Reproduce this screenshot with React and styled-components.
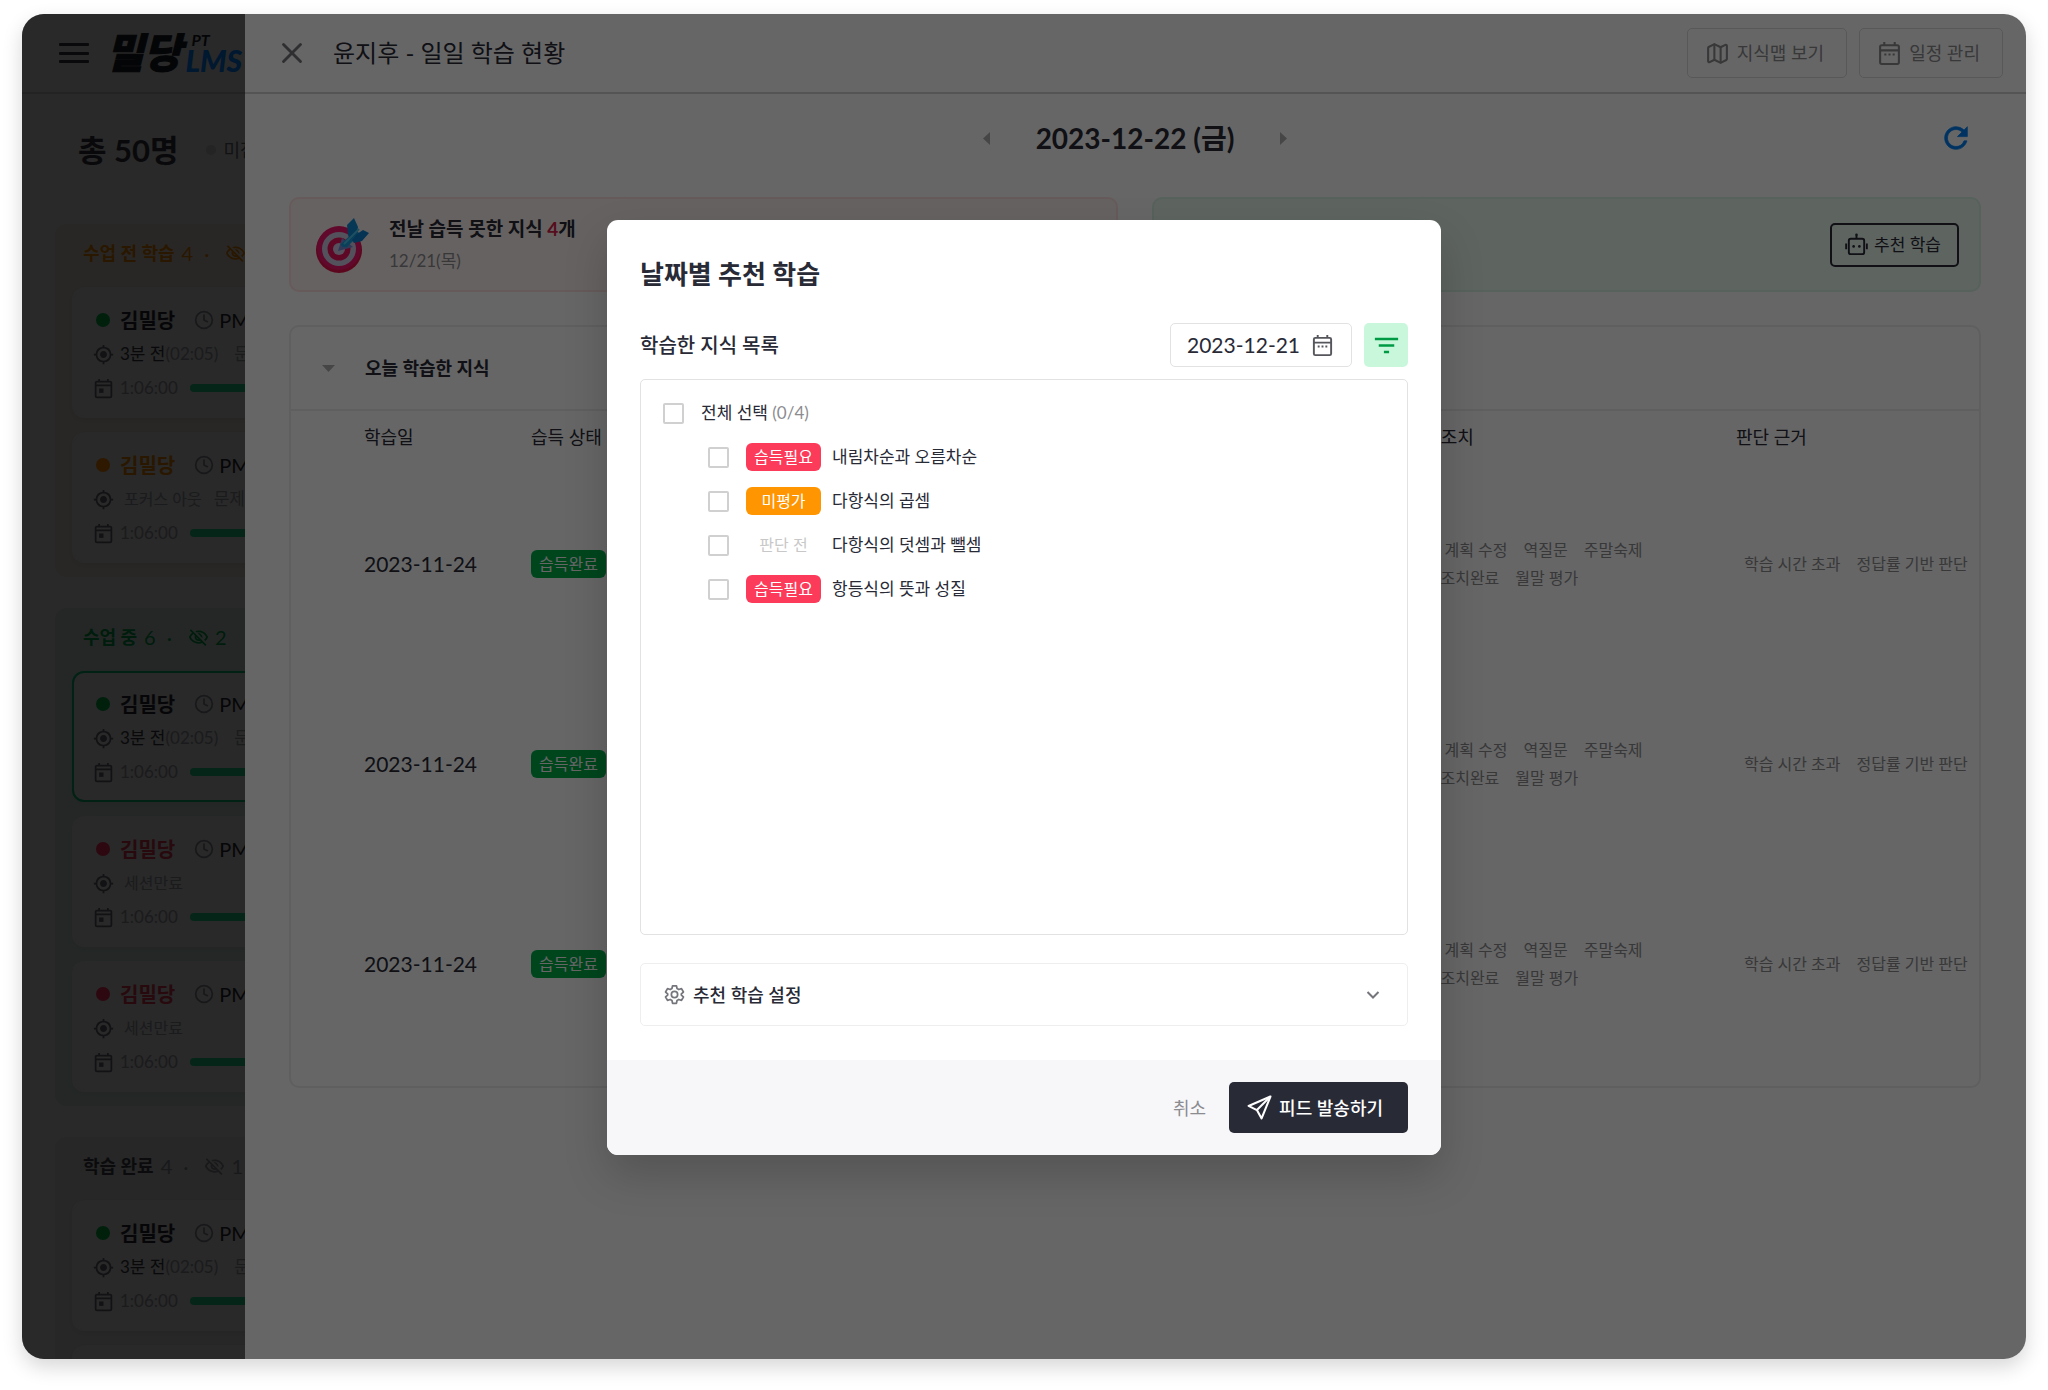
import React, { useState } from "react";
import styled, { createGlobalStyle } from "styled-components";
import { MdFilterList, MdGpsFixed, MdOutlineVisibilityOff } from "react-icons/md";
import { Clock, Map, X } from "lucide-react";

const COLORS = {
  white: "#ffffff",
  ink: "#282a36",
  gray700: "#55565c",
  gray600: "#75767c",
  gray500: "#8c8c90",
  gray300: "#c8c8c8",
  line: "#e2e2e2",
  softLine: "#eeeeee",
  red: "#fc3a59",
  orange: "#ff9500",
  green: "#00b04a",
  blue: "#0080f5",
};

const GROUP_TONES = {
  before: { panel: "#66625e", label: "#663a00", count: "#663a00" },
  during: { panel: "#5b635f", label: "#00481f", count: "#00481f" },
  done: { panel: "#626262", label: "#1c1d22", count: "#3e3f44" },
};

const STATE_TONES = {
  online: { dot: "#00501f", name: "#111115" },
  away: { dot: "#743f00", name: "#663a00" },
  expired: { dot: "#701628", name: "#651724" },
};

const GlobalStyle = createGlobalStyle`
  * {
    box-sizing: border-box;
  }
  body {
    margin: 0;
    background: ${COLORS.white};
    font-family: Lato, "Noto Sans CJK KR", sans-serif;
    font-size: 18px;
    line-height: 28px;
    color: ${COLORS.ink};
  }
  button,
  input {
    font: inherit;
    color: inherit;
  }
  h1,
  h2,
  h3,
  p {
    margin: 0;
    font-size: inherit;
    font-weight: 400;
  }
`;

const Page = styled.div`
  display: flow-root;
`;

const Window = styled.div`
  position: relative;
  display: flex;
  height: calc(100vh - 45px);
  margin: 14px 22px 31px;
  border-radius: 22px;
  overflow: hidden;
  background: ${COLORS.white};
  box-shadow: 0 8px 20px rgba(0, 0, 0, 0.16);
`;

/* sidebar */

const Sidebar = styled.aside`
  flex: none;
  width: 223px;
  overflow: hidden;
  white-space: nowrap;
  background: #666666;
`;

const SidebarHeader = styled.header`
  display: flex;
  align-items: center;
  gap: 17px;
  width: 400px;
  height: 80px;
  padding-left: 37px;
  border-bottom: 2px solid #585858;
`;

const MenuButton = styled.button`
  display: flex;
  flex-direction: column;
  justify-content: space-between;
  width: 30px;
  height: 20px;
  padding: 0;
  border: none;
  background: none;
`;

const MenuBar = styled.span`
  height: 3px;
  border-radius: 1px;
  background: #17181c;
`;

const Logo = styled.div`
  display: flex;
  align-items: center;
  gap: 4px;
  font-style: italic;
  font-weight: 900;
  color: #0c0d11;
`;

const LogoName = styled.span`
  font-size: 41px;
  line-height: 40px;
  -webkit-text-stroke: 1px #0c0d11;
`;

const LogoSide = styled.span`
  display: flex;
  flex-direction: column;
`;

const LogoTag = styled.span`
  padding-left: 6px;
  font-size: 16px;
  line-height: 14px;
  font-weight: 700;
`;

const LogoProduct = styled.span`
  font-size: 30px;
  line-height: 26px;
  color: #003c78;
`;

const Total = styled.div`
  display: flex;
  align-items: center;
  gap: 27px;
  padding: 38px 0 56px 56px;
`;

const TotalCount = styled.h2`
  font-size: 31px;
  line-height: 36px;
  font-weight: 700;
  color: #17181c;
`;

const TotalNote = styled.span`
  display: flex;
  align-items: center;
  gap: 8px;
  color: #2c2d30;
`;

const NoteDot = styled.span`
  width: 10px;
  height: 10px;
  border-radius: 50%;
  background: #5a5a5c;
`;

const Groups = styled.div`
  display: flex;
  flex-direction: column;
  gap: 31px;
  padding-left: 33px;
`;

const GroupPanel = styled.section`
  display: flex;
  flex-direction: column;
  gap: 14px;
  width: 400px;
  padding: 15px 17px 14px;
  border-radius: 12px;
  background: ${({ $tone }) => $tone.panel};
`;

const GroupTitle = styled.h3`
  display: flex;
  align-items: center;
  gap: 7px;
  height: 28px;
  margin-bottom: 6px;
  padding-left: 11px;
  font-weight: 700;
  color: ${({ $tone }) => $tone.label};
`;

const GroupCount = styled.span`
  display: flex;
  align-items: center;
  gap: 6px;
  font-weight: 400;
  font-size: 20px;
  color: ${({ $tone }) => $tone.count};
`;

const Separator = styled.span`
  padding: 0 10px 0 5px;
`;

const StudentCard = styled.article`
  display: flex;
  flex-direction: column;
  gap: 6px;
  height: 131px;
  padding: 17px 18px 0;
  border: 2px solid ${({ $selected }) => ($selected ? "#005430" : "#666666")};
  border-radius: 12px;
  background: #666666;
  box-shadow: 0 2px 6px rgba(0, 0, 0, 0.06);
  font-size: 17px;
`;

const CardRow = styled.div`
  display: flex;
  align-items: center;
  height: 28px;
  color: #434448;
`;

const IconCell = styled.span`
  display: flex;
  justify-content: center;
  flex: none;
  width: 22px;
  margin-right: 6px;
  color: #2e2f34;
`;

const StateDot = styled.span`
  width: 14px;
  height: 14px;
  border-radius: 50%;
  background: ${({ $color }) => $color};
`;

const StudentName = styled.span`
  margin-right: 19px;
  font-size: 20px;
  font-weight: 700;
  color: ${({ $color }) => $color};
`;

const StartTime = styled.span`
  display: flex;
  align-items: center;
  gap: 5px;
  font-size: 20px;
  color: #111115;
  svg {
    color: #3c3d42;
  }
`;

const LastSeen = styled.span`
  color: #17181c;
`;

const CardNote = styled.span`
  padding: 0 12px 0 4px;
  font-size: 16px;
`;

const Progress = styled.span`
  width: 160px;
  height: 8px;
  margin-left: 12px;
  border-radius: 4px;
  background: #0e5c3c;
`;

/* daily report drawer */

const Drawer = styled.main`
  flex: 1;
  min-width: 0;
  background: ${COLORS.white};
`;

const DrawerHeader = styled.header`
  display: flex;
  align-items: center;
  gap: 12px;
  height: 80px;
  padding: 0 23px 0 30px;
  border-bottom: 2px solid #d2d2d2;
`;

const DrawerTitle = styled.h1`
  flex: 1;
  padding-left: 12px;
  font-size: 24px;
  line-height: 36px;
`;

const PlainButton = styled.button`
  display: flex;
  align-items: center;
  justify-content: center;
  padding: 0;
  border: none;
  background: none;
  color: ${({ $color }) => $color || COLORS.gray500};
`;

const OutlineButton = styled.button`
  display: flex;
  align-items: center;
  gap: 7px;
  height: 50px;
  padding: 0 22px 0 17px;
  border: 1px solid #dcdcdc;
  border-radius: 5px;
  background: none;
  color: ${COLORS.gray500};
`;

const RecommendButton = styled(OutlineButton)`
  gap: 6px;
  height: 44px;
  padding: 0 16px 0 13px;
  border: 2px solid ${COLORS.ink};
  font-size: 17px;
  color: ${COLORS.ink};
`;

const DrawerBody = styled.div`
  display: flex;
  flex-direction: column;
  padding: 0 45px 0 44px;
`;

const DateBar = styled.div`
  display: grid;
  grid-template-columns: 1fr auto 1fr;
  align-items: center;
  height: 88px;
  margin-bottom: 15px;
`;

const DateNav = styled.div`
  grid-column: 2;
  display: flex;
  align-items: center;
  gap: 46px;
`;

const CurrentDate = styled.h2`
  font-size: 28px;
  line-height: 36px;
  font-weight: 700;
`;

const RefreshButton = styled(PlainButton)`
  justify-self: end;
  margin-right: 8px;
`;

const Summary = styled.div`
  display: grid;
  grid-template-columns: 1fr 1fr;
  gap: 34px;
  margin-bottom: 33px;
`;

const SummaryCard = styled.section`
  display: flex;
  align-items: center;
  justify-content: ${({ $end }) => ($end ? "flex-end" : "flex-start")};
  gap: 20px;
  height: 95px;
  padding: 0 20px 0 24px;
  border: 2px solid ${({ $border }) => $border};
  border-radius: 10px;
  background: ${({ $fill }) => $fill};
`;

const SummaryTitle = styled.h3`
  font-size: 19px;
  font-weight: 700;
`;

const SummaryDate = styled.p`
  padding-top: 4px;
  font-size: 17px;
  color: ${COLORS.gray500};
`;

const Accent = styled.em`
  font-style: normal;
  color: #d8224a;
`;

const KnowledgePanel = styled.section`
  padding-bottom: 22px;
  border: 2px solid ${COLORS.softLine};
  border-radius: 10px;
`;

const KnowledgeHeader = styled.header`
  display: flex;
  align-items: center;
  gap: 30px;
  height: 82px;
  padding-left: 31px;
`;

const KnowledgeTitle = styled.h3`
  font-weight: 700;
`;

const KnowledgeTable = styled.table`
  width: 100%;
  table-layout: fixed;
  border-collapse: collapse;
  border-top: 2px solid ${COLORS.softLine};
`;

const HeadCell = styled.th`
  width: ${({ $width }) => $width || "auto"};
  height: 54px;
  padding: 0 0 2px ${({ $first }) => ($first ? "73px" : "0")};
  text-align: left;
  font-weight: 400;
`;

const Cell = styled.td`
  height: 200px;
  padding: 0 0 0 ${({ $first }) => ($first ? "73px" : "0")};
  font-size: ${({ $first }) => ($first ? "21px" : "16px")};
`;

const TagLine = styled.div`
  display: flex;
  gap: 16px;
  padding-left: 8px;
  white-space: nowrap;
  color: ${COLORS.gray500};
`;

const Badge = styled.span`
  display: inline-flex;
  align-items: center;
  justify-content: center;
  width: 75px;
  height: 28px;
  border-radius: 6px;
  font-size: 16px;
  background: ${({ $fill }) => $fill};
  color: ${({ $color }) => $color || COLORS.white};
`;

/* modal */

const Backdrop = styled.div`
  position: absolute;
  inset: 0;
  display: flex;
  align-items: center;
  justify-content: center;
  padding-top: 2px;
  background: rgba(0, 0, 0, 0.6);
`;

const Modal = styled.div`
  width: 834px;
  border-radius: 11px;
  overflow: hidden;
  background: ${COLORS.white};
  box-shadow: 0 20px 44px rgba(0, 0, 0, 0.18);
`;

const ModalBody = styled.div`
  padding: 34px 33px;
`;

const ModalTitle = styled.h2`
  margin-bottom: 29px;
  font-size: 26px;
  line-height: 40px;
  font-weight: 700;
`;

const ListHeader = styled.div`
  display: flex;
  align-items: center;
  gap: 12px;
  margin-bottom: 12px;
`;

const ListTitle = styled.h3`
  flex: 1;
  font-size: 20px;
  font-weight: 500;
`;

const DateField = styled.label`
  display: flex;
  align-items: center;
  width: 182px;
  height: 44px;
  padding: 0 17px 0 16px;
  border: 1px solid ${COLORS.line};
  border-radius: 5px;
  font-size: 21px;
  svg {
    color: ${COLORS.gray700};
  }
`;

const DateInput = styled.input`
  flex: 1;
  min-width: 0;
  padding: 0;
  border: none;
  outline: none;
  background: none;
`;

const FilterButton = styled.button`
  display: flex;
  align-items: center;
  justify-content: center;
  width: 44px;
  height: 44px;
  padding: 0;
  border: none;
  border-radius: 5px;
  background: #c9f7dc;
  color: #009a44;
`;

const List = styled.div`
  display: flex;
  flex-direction: column;
  gap: 16px;
  height: 556px;
  margin-bottom: 28px;
  padding: 19px 22px;
  border: 1px solid ${COLORS.line};
  border-radius: 5px;
`;

const CheckRow = styled.label`
  display: flex;
  align-items: center;
  gap: 17px;
  height: 28px;
  padding-left: ${({ $nested }) => ($nested ? "45px" : "0")};
  font-size: 17px;
`;

const Checkbox = styled.input`
  appearance: none;
  flex: none;
  width: 21px;
  height: 21px;
  margin: 0;
  border: 2px solid #d0d0d0;
  border-radius: 2px;
  background: ${COLORS.white};
  &:checked {
    border-color: ${COLORS.green};
    background: ${COLORS.green};
  }
`;

const CheckText = styled.span`
  display: flex;
  gap: 11px;
`;

const Muted = styled.span`
  color: ${COLORS.gray500};
`;

const SettingsToggle = styled.button`
  display: flex;
  align-items: center;
  gap: 8px;
  width: 100%;
  height: 63px;
  padding: 0 27px 0 23px;
  border: 1px solid ${COLORS.softLine};
  border-radius: 5px;
  background: none;
  font-weight: 500;
  svg {
    color: ${COLORS.gray600};
  }
`;

const SettingsLabel = styled.span`
  flex: 1;
  text-align: left;
`;

const ModalFooter = styled.footer`
  display: flex;
  align-items: center;
  justify-content: flex-end;
  gap: 23px;
  height: 95px;
  padding: 0 33px;
  background: #f7f7fa;
`;

const SubmitButton = styled.button`
  display: flex;
  align-items: center;
  gap: 7px;
  height: 51px;
  padding: 0 25px 0 18px;
  border: none;
  border-radius: 5px;
  background: ${COLORS.ink};
  color: ${COLORS.white};
  font-weight: 500;
`;

const CalendarIcon = ({ size }) => (
  <svg width={size} height={size} viewBox="0 0 24 24" fill="none" stroke="currentColor" strokeWidth="2">
    <rect x="3" y="4" width="18" height="18" rx="1.5" />
    <path d="M3 9h18M7 1V4M17 1V4" />
    <path d="M7 13h2M11 13h2M15 13h2" />
  </svg>
);

const TodayIcon = ({ size }) => (
  <svg width={size} height={size} viewBox="0 0 24 24" fill="none" stroke="currentColor" strokeWidth="2">
    <rect x="3" y="4" width="18" height="18" rx="1.5" />
    <path d="M3 8.5h18M7 1V4M17 1V4" />
    <rect x="7" y="12" width="5" height="5" fill="currentColor" stroke="none" />
  </svg>
);

const RefreshIcon = ({ size }) => (
  <svg width={size} height={size} viewBox="0 0 24 24" fill="currentColor" stroke="currentColor" strokeWidth="0.5">
    <path d="M17.65 6.35A7.96 7.96 0 0 0 12 4c-4.42 0-7.99 3.58-7.99 8s3.57 8 7.99 8c3.73 0 6.84-2.55 7.73-6h-2.08A5.99 5.99 0 0 1 12 18c-3.31 0-6-2.69-6-6s2.69-6 6-6c1.66 0 3.14.69 4.22 1.78L13 11h7V4l-2.35 2.35z" />
  </svg>
);

const RobotIcon = ({ size }) => (
  <svg width={size} height={size} viewBox="0 0 24 24" fill="none" stroke="currentColor" strokeWidth="2">
    <rect x="4" y="6" width="16" height="16" rx="2" />
    <path d="M12 6V3M1.2 11v6M22.8 11v6" />
    <circle cx="12" cy="2" r="1.4" fill="currentColor" stroke="none" />
    <circle cx="9" cy="14" r="1.4" fill="currentColor" stroke="none" />
    <circle cx="15" cy="14" r="1.4" fill="currentColor" stroke="none" />
  </svg>
);

const SendIcon = ({ size }) => (
  <svg width={size} height={size} viewBox="0 0 24 24" fill="none" stroke="currentColor" strokeWidth="2" strokeLinejoin="round">
    <path d="M22.5 1.5 1.5 10.5 9.5 14.5 14 22.5Z" />
    <path d="M22.5 1.5 9.5 14.5" />
  </svg>
);

const GearIcon = ({ size }) => (
  <svg width={size} height={size} viewBox="0 0 24 24" fill="none" stroke="currentColor" strokeWidth="2" strokeLinejoin="round">
    <path d="M9.8 2h4.4l.7 3.1 2 1.2 3.1-1 2.2 3.9-2.4 2.1v1.4l2.4 2.1-2.2 3.9-3.1-1-2 1.2-.7 3.1H9.8l-.7-3.1-2-1.2-3.1 1-2.2-3.9 2.4-2.1v-1.4L1.8 9.2 4 5.3l3.1 1 2-1.2Z" />
    <circle cx="12" cy="12" r="3.6" />
  </svg>
);

const ChevronIcon = () => (
  <svg width="14" height="10" viewBox="0 0 14 10" fill="none" stroke="currentColor" strokeWidth="2">
    <path d="M1.5 2 7 7.5 12.5 2" />
  </svg>
);

const Triangle = ({ width, height, points }) => (
  <svg width={width} height={height} fill="#b0b0b0">
    <polygon points={points} />
  </svg>
);

const TargetIcon = () => (
  <svg width="54" height="56" viewBox="0 0 54 56">
    <circle cx="24" cy="33" r="23" fill="#e6124c" />
    <circle cx="24" cy="31" r="22" fill="#f0186e" />
    <circle cx="24" cy="32" r="17" fill="#cfcbe4" />
    <circle cx="24" cy="32" r="11.5" fill="#ee1660" />
    <circle cx="24" cy="32" r="6" fill="#d5cdea" />
    <path d="M23 34 27 21l11 9Z" fill="#7c8edb" />
    <path d="M26 27 41 13l4 4-13 13q-6 1-6-3Z" fill="#18a0e0" />
    <path d="M33 18 32 8l7-7 4 9-1 6-7 7Z" fill="#108cd8" />
    <path d="M37 23l5-6 6-4 6 3-7 8-8 2Z" fill="#0a80d0" />
    <path d="M29 27 44 12" stroke="#4cc8f4" strokeWidth="2" />
  </svg>
);

const GROUPS = [
  {
    id: "before",
    label: "수업 전 학습",
    count: 4,
    hidden: 2,
    students: [{ state: "online" }, { state: "away", note: "포커스 아웃" }],
  },
  {
    id: "during",
    label: "수업 중",
    count: 6,
    hidden: 2,
    students: [
      { state: "online", selected: true },
      { state: "expired", note: "세션만료" },
      { state: "expired", note: "세션만료" },
    ],
  },
  {
    id: "done",
    label: "학습 완료",
    count: 4,
    hidden: 1,
    students: [{ state: "online" }, { state: "online" }],
  },
];

const REPORT_ROWS = [1, 2, 3];

const KNOWLEDGE = [
  { badge: "습득필요", fill: COLORS.red, title: "내림차순과 오름차순" },
  { badge: "미평가", fill: COLORS.orange, title: "다항식의 곱셈" },
  { badge: "판단 전", fill: "none", color: COLORS.gray300, title: "다항식의 덧셈과 뺄셈" },
  { badge: "습득필요", fill: COLORS.red, title: "항등식의 뜻과 성질" },
];

const Student = ({ state, selected, note }) => {
  const tone = STATE_TONES[state];

  return (
    <StudentCard $selected={selected}>
      <CardRow>
        <IconCell>
          <StateDot $color={tone.dot} />
        </IconCell>
        <StudentName $color={tone.name}>김밀당</StudentName>
        <StartTime>
          <Clock size={20} strokeWidth={2} />
          PM
        </StartTime>
      </CardRow>
      <CardRow>
        <IconCell>
          <MdGpsFixed size={21} />
        </IconCell>
        {note ? (
          <CardNote>{note}</CardNote>
        ) : (
          <>
            <LastSeen>3분 전</LastSeen>
            <span>(02:05)</span>
            <CardNote />
          </>
        )}
        {state !== "expired" && <span>문제</span>}
      </CardRow>
      <CardRow>
        <IconCell>
          <TodayIcon size={21} />
        </IconCell>
        1:06:00
        <Progress />
      </CardRow>
    </StudentCard>
  );
};

const StudentGroup = ({ group }) => {
  const tone = GROUP_TONES[group.id];

  return (
    <GroupPanel $tone={tone}>
      <GroupTitle $tone={tone}>
        {group.label}
        <GroupCount $tone={tone}>
          {group.count}
          <Separator>·</Separator>
          <MdOutlineVisibilityOff size={21} />
          {group.hidden}
        </GroupCount>
      </GroupTitle>
      {group.students.map((student, index) => (
        <Student key={index} {...student} />
      ))}
    </GroupPanel>
  );
};

const StudentSidebar = () => (
  <Sidebar>
    <SidebarHeader>
      <MenuButton aria-label="메뉴">
        <MenuBar />
        <MenuBar />
        <MenuBar />
      </MenuButton>
      <Logo>
        <LogoName>밀당</LogoName>
        <LogoSide>
          <LogoTag>PT</LogoTag>
          <LogoProduct>LMS</LogoProduct>
        </LogoSide>
      </Logo>
    </SidebarHeader>
    <Total>
      <TotalCount>총 50명</TotalCount>
      <TotalNote>
        <NoteDot />
        미접
      </TotalNote>
    </Total>
    <Groups>
      {GROUPS.map((group) => (
        <StudentGroup key={group.id} group={group} />
      ))}
    </Groups>
  </Sidebar>
);

const KnowledgeReport = () => (
  <KnowledgePanel>
    <KnowledgeHeader>
      <Triangle width="13" height="7" points="0,0 13,0 6.5,7" />
      <KnowledgeTitle>오늘 학습한 지식</KnowledgeTitle>
    </KnowledgeHeader>
    <KnowledgeTable>
      <thead>
        <tr>
          <HeadCell $first $width="240px">학습일</HeadCell>
          <HeadCell>습득 상태</HeadCell>
          <HeadCell $width="333px">추천 조치</HeadCell>
          <HeadCell $width="243px">판단 근거</HeadCell>
        </tr>
      </thead>
      <tbody>
        {REPORT_ROWS.map((row) => (
          <tr key={row}>
            <Cell $first>2023-11-24</Cell>
            <Cell>
              <Badge $fill={COLORS.green}>습득완료</Badge>
            </Cell>
            <Cell>
              <TagLine>
                <span>학습 계획 수정</span>
                <span>역질문</span>
                <span>주말숙제</span>
              </TagLine>
              <TagLine>
                <span>학습조치완료</span>
                <span>월말 평가</span>
              </TagLine>
            </Cell>
            <Cell>
              <TagLine>
                <span>학습 시간 초과</span>
                <span>정답률 기반 판단</span>
              </TagLine>
            </Cell>
          </tr>
        ))}
      </tbody>
    </KnowledgeTable>
  </KnowledgePanel>
);

const DailyReport = () => (
  <Drawer>
    <DrawerHeader>
      <PlainButton aria-label="닫기" $color={COLORS.gray600}>
        <X size={34} strokeWidth={2} />
      </PlainButton>
      <DrawerTitle>윤지후 - 일일 학습 현황</DrawerTitle>
      <OutlineButton>
        <Map size={25} strokeWidth={2} />
        지식맵 보기
      </OutlineButton>
      <OutlineButton>
        <CalendarIcon size={25} />
        일정 관리
      </OutlineButton>
    </DrawerHeader>
    <DrawerBody>
      <DateBar>
        <DateNav>
          <PlainButton aria-label="이전 날짜">
            <Triangle width="7" height="13" points="7,0 7,13 0,6.5" />
          </PlainButton>
          <CurrentDate>2023-12-22 (금)</CurrentDate>
          <PlainButton aria-label="다음 날짜">
            <Triangle width="7" height="13" points="0,0 0,13 7,6.5" />
          </PlainButton>
        </DateNav>
        <RefreshButton aria-label="새로고침" $color={COLORS.blue}>
          <RefreshIcon size={34} />
        </RefreshButton>
      </DateBar>
      <Summary>
        <SummaryCard $fill="#fff5f3" $border="#ffe4e2">
          <TargetIcon />
          <div>
            <SummaryTitle>
              전날 습득 못한 지식 <Accent>4</Accent>개
            </SummaryTitle>
            <SummaryDate>12/21(목)</SummaryDate>
          </div>
        </SummaryCard>
        <SummaryCard $end $fill="#ebfbf1" $border="#d8f4e4">
          <RecommendButton>
            <RobotIcon size={23} />
            추천 학습
          </RecommendButton>
        </SummaryCard>
      </Summary>
      <KnowledgeReport />
    </DrawerBody>
  </Drawer>
);

const RecommendModal = () => {
  const [checked, setChecked] = useState([]);
  const [date, setDate] = useState("2023-12-21");
  const allChecked = checked.length === KNOWLEDGE.length;

  const toggleAll = () =>
    setChecked(allChecked ? [] : KNOWLEDGE.map((_, index) => index));

  const toggle = (index) =>
    setChecked(
      checked.includes(index)
        ? checked.filter((item) => item !== index)
        : [...checked, index]
    );

  return (
    <Backdrop>
      <Modal role="dialog" aria-modal="true" aria-labelledby="modal-title">
        <ModalBody>
          <ModalTitle id="modal-title">날짜별 추천 학습</ModalTitle>
          <ListHeader>
            <ListTitle>학습한 지식 목록</ListTitle>
            <DateField>
              <DateInput
                aria-label="학습일"
                value={date}
                onChange={(event) => setDate(event.target.value)}
              />
              <CalendarIcon size={23} />
            </DateField>
            <FilterButton aria-label="필터">
              <MdFilterList size={31} />
            </FilterButton>
          </ListHeader>
          <List>
            <CheckRow>
              <Checkbox type="checkbox" checked={allChecked} onChange={toggleAll} />
              <span>
                전체 선택 <Muted>({checked.length}/{KNOWLEDGE.length})</Muted>
              </span>
            </CheckRow>
            {KNOWLEDGE.map((item, index) => (
              <CheckRow key={item.title} $nested>
                <Checkbox
                  type="checkbox"
                  checked={checked.includes(index)}
                  onChange={() => toggle(index)}
                />
                <CheckText>
                  <Badge $fill={item.fill} $color={item.color}>
                    {item.badge}
                  </Badge>
                  {item.title}
                </CheckText>
              </CheckRow>
            ))}
          </List>
          <SettingsToggle>
            <GearIcon size={21} />
            <SettingsLabel>추천 학습 설정</SettingsLabel>
            <ChevronIcon />
          </SettingsToggle>
        </ModalBody>
        <ModalFooter>
          <PlainButton>취소</PlainButton>
          <SubmitButton>
            <SendIcon size={25} />
            피드 발송하기
          </SubmitButton>
        </ModalFooter>
      </Modal>
    </Backdrop>
  );
};

const App = () => (
  <Page>
    <GlobalStyle />
    <Window>
      <StudentSidebar />
      <DailyReport />
      <RecommendModal />
    </Window>
  </Page>
);

export default App;
